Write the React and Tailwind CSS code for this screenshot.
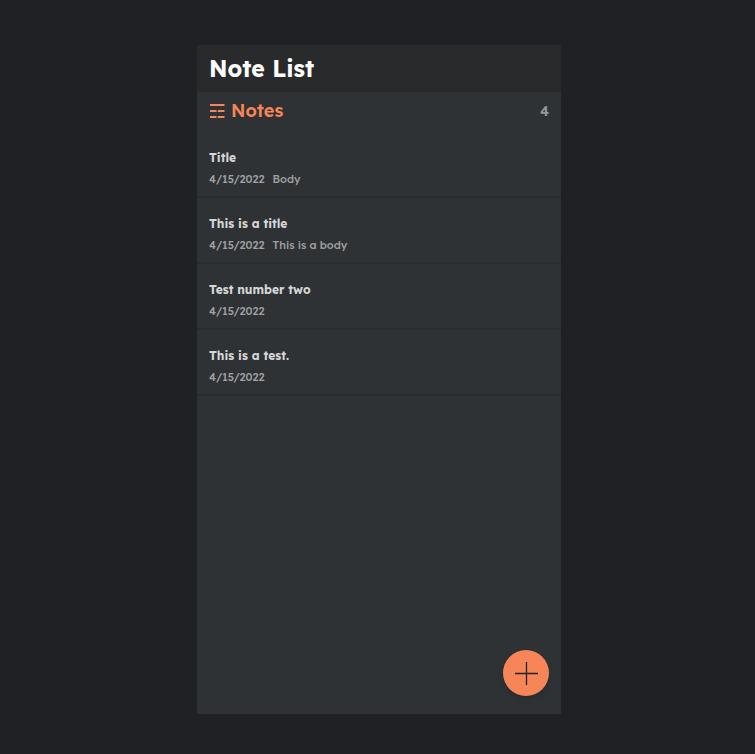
const notes = [
  { id: 1, title: 'Title', date: '4/15/2022', body: 'Body' },
  { id: 2, title: 'This is a title', date: '4/15/2022', body: 'This is a body' },
  { id: 3, title: 'Test number two', date: '4/15/2022', body: '' },
  { id: 4, title: 'This is a test.', date: '4/15/2022', body: '' },
];

function ListIcon() {
  return (
    <svg className="h-4 w-4" viewBox="0 0 16 16" fill="none" stroke="currentColor" strokeWidth="2" aria-hidden="true">
      <path d="M1 2h14.5M1 8h6.5M8.7 8h6.8M1 14h6.5M8.7 14h6.8" />
    </svg>
  );
}

function NoteItem({ note }) {
  return (
    <li className="flex h-[66px] flex-col justify-end border-b-2 border-[#2a2d2f] px-3 pb-1.5 hover:bg-[#323639]">
      <h3 className="text-xs leading-5 font-bold text-[#d6d6d6]">{note.title}</h3>
      <p className="flex gap-2 text-[11px] leading-[22px] font-medium text-[#a0a2a3]">
        <span>{note.date}</span>
        {note.body && <span>{note.body}</span>}
      </p>
    </li>
  );
}

export default function App() {
  return (
    <div className="flex min-h-screen flex-col items-center bg-[#202124] pt-[45px] pb-10 pl-[3px] font-['Lexend','Inter',sans-serif]">
      <main className="relative flex w-full max-w-[364px] flex-1 flex-col bg-[#2e3235]">
        <header className="flex h-[47px] items-center bg-[#292a2b] px-3 pt-[2px]">
          <h1 className="text-[23px] font-bold text-white">Note List</h1>
        </header>
        <div className="flex h-[38px] items-center justify-between px-3">
          <h2 className="flex items-center gap-[6px] text-lg font-semibold text-[#f68657]">
            <ListIcon />
            Notes
          </h2>
          <p className="text-sm font-semibold text-[#969899]">{notes.length}</p>
        </div>
        <ul className="flex flex-col pt-[2px]">
          {notes.map((note) => (
            <NoteItem key={note.id} note={note} />
          ))}
        </ul>
        <button
          type="button"
          aria-label="Add note"
          className="absolute right-3 bottom-[18px] flex h-[46px] w-[46px] items-center justify-center rounded-full bg-[#f68657] text-[#202124] shadow-md"
        >
          <svg className="h-6 w-6" viewBox="0 0 24 24" fill="none" stroke="currentColor" strokeWidth="1.3" aria-hidden="true">
            <path d="M12.5 1v23M1 12.5h23" />
          </svg>
        </button>
      </main>
    </div>
  );
}
